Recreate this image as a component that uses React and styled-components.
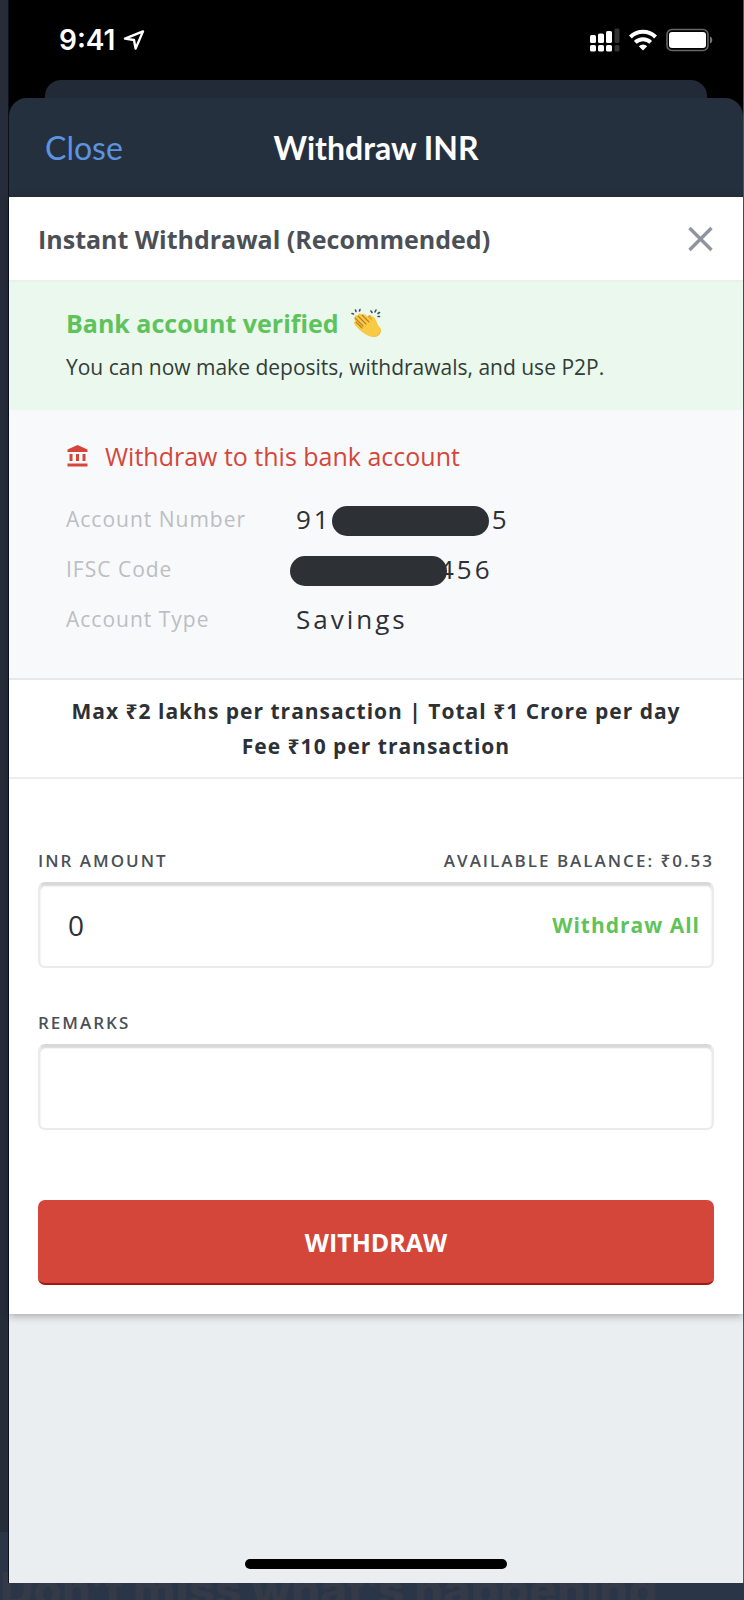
import { useState } from 'react';
import styled, { createGlobalStyle } from 'styled-components';

const colors = {
  navy: '#262c3a',
  header: '#25303e',
  green: '#5fc35c',
  red: '#d5463a',
  ink: '#2d3035',
  slate: '#4b5057',
  muted: '#bcbec1',
  white: '#fff',
};

const accountRows = [
  { label: 'Account Number', before: '91', masked: true, after: '5' },
  { label: 'IFSC Code', before: '', masked: true, after: '456' },
  { label: 'Account Type', before: 'Savings' },
];

function App() {
  const [open, setOpen] = useState(true);
  const [amount, setAmount] = useState('0');
  const [remarks, setRemarks] = useState('');

  return (
    <Page>
      <GlobalStyle />
      <Teaser>Don’t miss what’s happening</Teaser>
      <Phone>
        <StatusBar>
          <Clock>
            9:41
            <LocationIcon />
          </Clock>
          <Indicators>
            <SignalIcon />
            <WifiIcon />
            <BatteryIcon />
          </Indicators>
        </StatusBar>
        <BackSheet />
        <Header>
          <CloseButton type="button">Close</CloseButton>
          <HeaderTitle>Withdraw INR</HeaderTitle>
        </Header>
        <Body>
          {open && (
            <Card>
              <CardHead>
                <CardTitle>Instant Withdrawal (Recommended)</CardTitle>
                <DismissButton type="button" aria-label="Dismiss" onClick={() => setOpen(false)}>
                  <CrossIcon />
                </DismissButton>
              </CardHead>
              <Verified>
                <VerifiedTitle>
                  Bank account verified
                  <ClapIcon />
                </VerifiedTitle>
                <VerifiedText>You can now make deposits, withdrawals, and use P2P.</VerifiedText>
              </Verified>
              <Account>
                <AccountTitle>
                  <BankIcon />
                  Withdraw to this bank account
                </AccountTitle>
                <AccountList>
                  {accountRows.map(({ label, before, masked, after }) => (
                    <AccountRow key={label}>
                      <AccountLabel>{label}</AccountLabel>
                      <AccountValue>
                        {before}
                        {masked && <Mask $overlap={!before} />}
                        {after}
                      </AccountValue>
                    </AccountRow>
                  ))}
                </AccountList>
              </Account>
              <Limits>
                <p>Max ₹2 lakhs per transaction | Total ₹1 Crore per day</p>
                <p>Fee ₹10 per transaction</p>
              </Limits>
              <Form onSubmit={(e) => e.preventDefault()}>
                <FieldHead>
                  <label htmlFor="amount">INR AMOUNT</label>
                  <span>AVAILABLE BALANCE: ₹0.53</span>
                </FieldHead>
                <Field>
                  <Input
                    id="amount"
                    inputMode="decimal"
                    value={amount}
                    onChange={(e) => setAmount(e.target.value)}
                  />
                  <WithdrawAll type="button" onClick={() => setAmount('0.53')}>
                    Withdraw All
                  </WithdrawAll>
                </Field>
                <FieldHead>
                  <label htmlFor="remarks">REMARKS</label>
                </FieldHead>
                <Field>
                  <Input id="remarks" value={remarks} onChange={(e) => setRemarks(e.target.value)} />
                </Field>
                <Submit type="submit">WITHDRAW</Submit>
              </Form>
            </Card>
          )}
          <HomeIndicator />
        </Body>
      </Phone>
    </Page>
  );
}

export default App;

function LocationIcon() {
  return (
    <svg width="22" height="22" viewBox="0 0 22 22" fill="none" aria-hidden="true">
      <path
        d="M2 9.6 20 2.4 12.6 19.6 11 11Z"
        stroke="#fff"
        strokeWidth="2.4"
        strokeLinejoin="round"
      />
    </svg>
  );
}

function SignalIcon() {
  return (
    <svg width="30" height="24" viewBox="0 0 30 24" fill="#fff" aria-hidden="true">
      <rect x="0" y="7" width="6" height="8" rx="1.6" />
      <rect x="8" y="5.5" width="6" height="9.5" rx="1.6" />
      <rect x="16" y="3" width="6" height="12" rx="1.6" />
      <rect x="0" y="17" width="6" height="6.5" rx="1.6" />
      <rect x="8" y="17" width="6" height="6.5" rx="1.6" />
      <rect x="16" y="17" width="6" height="6.5" rx="1.6" />
      <g fill="#333">
        <rect x="24.5" y="0.5" width="5" height="14.5" rx="1.6" />
        <rect x="24.5" y="17" width="5" height="6.5" rx="1.6" />
      </g>
    </svg>
  );
}

function WifiIcon() {
  return (
    <svg width="28" height="22" viewBox="0 0 28 22" aria-hidden="true">
      <g fill="none" stroke="#fff" strokeWidth="4">
        <path d="M1.4 8a18 18 0 0 1 25.2 0" />
        <path d="M6.3 13.4a11 11 0 0 1 15.4 0" />
      </g>
      <path d="M14 21.5 9.8 17.3a6 6 0 0 1 8.4 0Z" fill="#fff" />
    </svg>
  );
}

function BatteryIcon() {
  return (
    <svg width="47" height="24" viewBox="0 0 47 24" aria-hidden="true">
      <rect x="1" y="1.5" width="41" height="21" rx="5" fill="none" stroke="#666" strokeWidth="1.6" />
      <rect x="3" y="4" width="37" height="16" rx="3" fill="#fff" />
      <path d="M44 8.5v7c3-1 3-6 0-7Z" fill="#777" />
    </svg>
  );
}

function CrossIcon() {
  return (
    <svg width="26" height="26" viewBox="0 0 26 26" aria-hidden="true">
      <path d="M1.5 2 23.5 24M23.5 2 1.5 24" stroke="#90959d" strokeWidth="3.4" />
    </svg>
  );
}

function BankIcon() {
  return (
    <svg width="22" height="22" viewBox="-1.5 0 22 22" fill={colors.red} aria-hidden="true">
      <path d="M10 0 20 4.6V7H0V4.6Z" />
      <path d="M2 9h3v7H2zM8.5 9h3v7h-3zM15 9h3v7h-3zM0 18.5h20V21.5H0z" />
    </svg>
  );
}

function ClapIcon() {
  return (
    <svg width="30" height="30" viewBox="0 0 30 30" role="img" aria-label="clapping hands">
      <path d="M16 10c1-3 3-4 4-2l6 8 4 7c-1 5-6 7-10 5l-6-6Z" fill="#e9a92f" />
      <path
        d="M4 10c-1-2 1-4 3-2 0-3 2-3 4-1 1-2 3-1 5 1l5 5c0-2-1-4 0-5 3 1 4 4 6 9l3 4c0 4-5 9-9 8-6-1-14-8-17-12-2-2-1-4 1-3-2-2-2-4-1-4Z"
        fill="#f9cb45"
      />
      <path
        d="m4 10 8 8M7 8l8 8M11 7l7 7M5 14l6 6"
        stroke="#bc7d24"
        strokeWidth="1.1"
        strokeLinecap="round"
        fill="none"
      />
      <path
        d="M1 5.5 2.5 6M4.5 2 5 3.5M9 1.5 8.5 3M20 3 21 4.5M25 2 24 4M28.5 4.5 27 5.5M28.5 8.5 27 8.5"
        stroke="#46515c"
        strokeWidth="1.6"
        strokeLinecap="round"
        fill="none"
      />
    </svg>
  );
}

const GlobalStyle = createGlobalStyle`
  * {
    box-sizing: border-box;
    margin: 0;
    padding: 0;
  }

  body {
    background: ${colors.navy};
    font-family: 'Open Sans', 'Noto Sans', sans-serif;
  }

  button, input {
    border: 0;
    background: none;
    font: inherit;
    letter-spacing: inherit;
  }

  button {
    cursor: pointer;
  }

  svg {
    flex: none;
  }
`;

const Page = styled.main`
  position: relative;
  display: flex;
  min-height: 100vh;
  padding: 0 0 17px 8px;
  overflow: hidden;
`;

/* banner of the page behind, mostly covered by the phone */
const Teaser = styled.p`
  position: absolute;
  right: 0;
  bottom: 0;
  left: 0;

  height: 68px;
  padding-top: 30px;

  background: #2a3648;
  color: #343a47;
  font: 800 46px/54px Inter, sans-serif;
  white-space: nowrap;
`;

const Phone = styled.div`
  position: relative;
  display: flex;
  flex: 1;
  flex-direction: column;
  min-width: 0;
  border-right: 1px solid #4f545b;
  border-left: 1px solid #0c111b;

  background: #000;
`;

const StatusBar = styled.div`
  display: flex;
  align-items: center;
  justify-content: space-between;
  height: 80px;
  padding: 0 30px 0 50px;
`;

const Clock = styled.div`
  display: flex;
  align-items: center;
  gap: 8px;

  color: ${colors.white};
  font: 600 28px/32px Inter, sans-serif;
`;

const Indicators = styled.div`
  display: flex;
  align-items: center;
  gap: 9px;
`;

const BackSheet = styled.div`
  height: 18px;
  margin: 0 36px;
  border-radius: 16px 16px 0 0;

  background: #222a38;
`;

const Header = styled.header`
  display: grid;
  grid-template-columns: 1fr auto 1fr;
  align-items: center;
  height: 99px;
  padding: 0 36px;
  border-radius: 18px 18px 0 0;

  background: ${colors.header};
  font-family: Lato, sans-serif;
`;

const CloseButton = styled.button`
  justify-self: start;

  color: #5c94e0;
  font-size: 32px;
  line-height: 40px;
`;

const HeaderTitle = styled.h1`
  color: ${colors.white};
  font-size: 32px;
  font-weight: 700;
  line-height: 40px;
`;

const Body = styled.div`
  display: flex;
  flex: 1;
  flex-direction: column;

  background: #ebeef1;
`;

const Card = styled.section`
  background: ${colors.white};
  box-shadow: 0 2px 8px rgba(0, 0, 0, 0.3);
`;

const CardHead = styled.div`
  display: flex;
  align-items: center;
  justify-content: space-between;
  height: 85px;
  padding: 0 29px;
  border-bottom: 2px solid #ebefee;
`;

const CardTitle = styled.h2`
  color: ${colors.slate};
  font-size: 25px;
  font-weight: 700;
  line-height: 34px;
`;

const DismissButton = styled.button`
  display: flex;
`;

const Verified = styled.div`
  padding: 23px 57px 27px;

  background: #eaf8ee;
`;

const VerifiedTitle = styled.h3`
  display: flex;
  align-items: center;
  gap: 12px;

  color: ${colors.green};
  font-size: 25px;
  font-weight: 700;
  line-height: 36px;
`;

const VerifiedText = styled.p`
  padding-top: 10px;

  color: #333c36;
  font-size: 21px;
  line-height: 32px;
`;

const Account = styled.div`
  padding: 28px 57px 34px;
  border-bottom: 2px solid #e6e8ec;

  background: #f8f9fb;
`;

const AccountTitle = styled.h3`
  display: flex;
  align-items: center;
  gap: 17px;

  color: ${colors.red};
  font-size: 25px;
  font-weight: 400;
  line-height: 36px;
`;

const AccountList = styled.dl`
  padding-top: 20px;
`;

const AccountRow = styled.div`
  display: grid;
  grid-template-columns: 230px 1fr;
  align-items: center;
  height: 50px;
`;

const AccountLabel = styled.dt`
  color: ${colors.muted};
  font-size: 21px;
  letter-spacing: 1px;
`;

const AccountValue = styled.dd`
  display: flex;
  align-items: center;

  color: ${colors.ink};
  font-size: 26px;
  letter-spacing: 3px;
`;

const Mask = styled.span`
  position: relative;
  width: 157px;
  height: 30px;
  margin: ${({ $overlap }) => ($overlap ? '3px -8px 0 -6px' : '3px 3px 0 0')};
  border-radius: 15px;

  background: ${colors.ink};
`;

const Limits = styled.div`
  padding: 14px 20px 13px;
  border-bottom: 2px solid #ededef;

  color: ${colors.ink};
  font-size: 21px;
  font-weight: 700;
  letter-spacing: 1px;
  line-height: 35px;
  text-align: center;
`;

const Form = styled.form`
  padding: 69px 29px 29px;
`;

const FieldHead = styled.div`
  display: flex;
  justify-content: space-between;
  padding-bottom: 8px;

  color: ${colors.slate};
  font-size: 17px;
  font-weight: 600;
  letter-spacing: 2px;
  line-height: 26px;
`;

const Field = styled.div`
  display: flex;
  align-items: center;
  height: 86px;
  margin-bottom: 42px;
  padding: 0 12px 0 28px;
  border: 2px solid #ebebec;
  border-top-color: #d9d9d9;
  border-radius: 7px;

  box-shadow: inset 0 2px 2px #d6d6d6;
`;

const Input = styled.input`
  flex: 1;
  min-width: 0;
  height: 60px;

  color: ${colors.ink};
  font-size: 28px;
  outline: none;
`;

const WithdrawAll = styled.button`
  color: ${colors.green};
  font-size: 21px;
  font-weight: 700;
  letter-spacing: 1px;
`;

const Submit = styled.button`
  width: 100%;
  height: 85px;
  margin-top: 28px;
  border-bottom: 2px solid #a3180f;
  border-radius: 7px;

  background: ${colors.red};
  color: ${colors.white};
  font-size: 25px;
  font-weight: 700;
`;

const HomeIndicator = styled.div`
  width: 262px;
  height: 10px;
  margin: auto auto 14px;
  border-radius: 5px;

  background: #000;
`;
